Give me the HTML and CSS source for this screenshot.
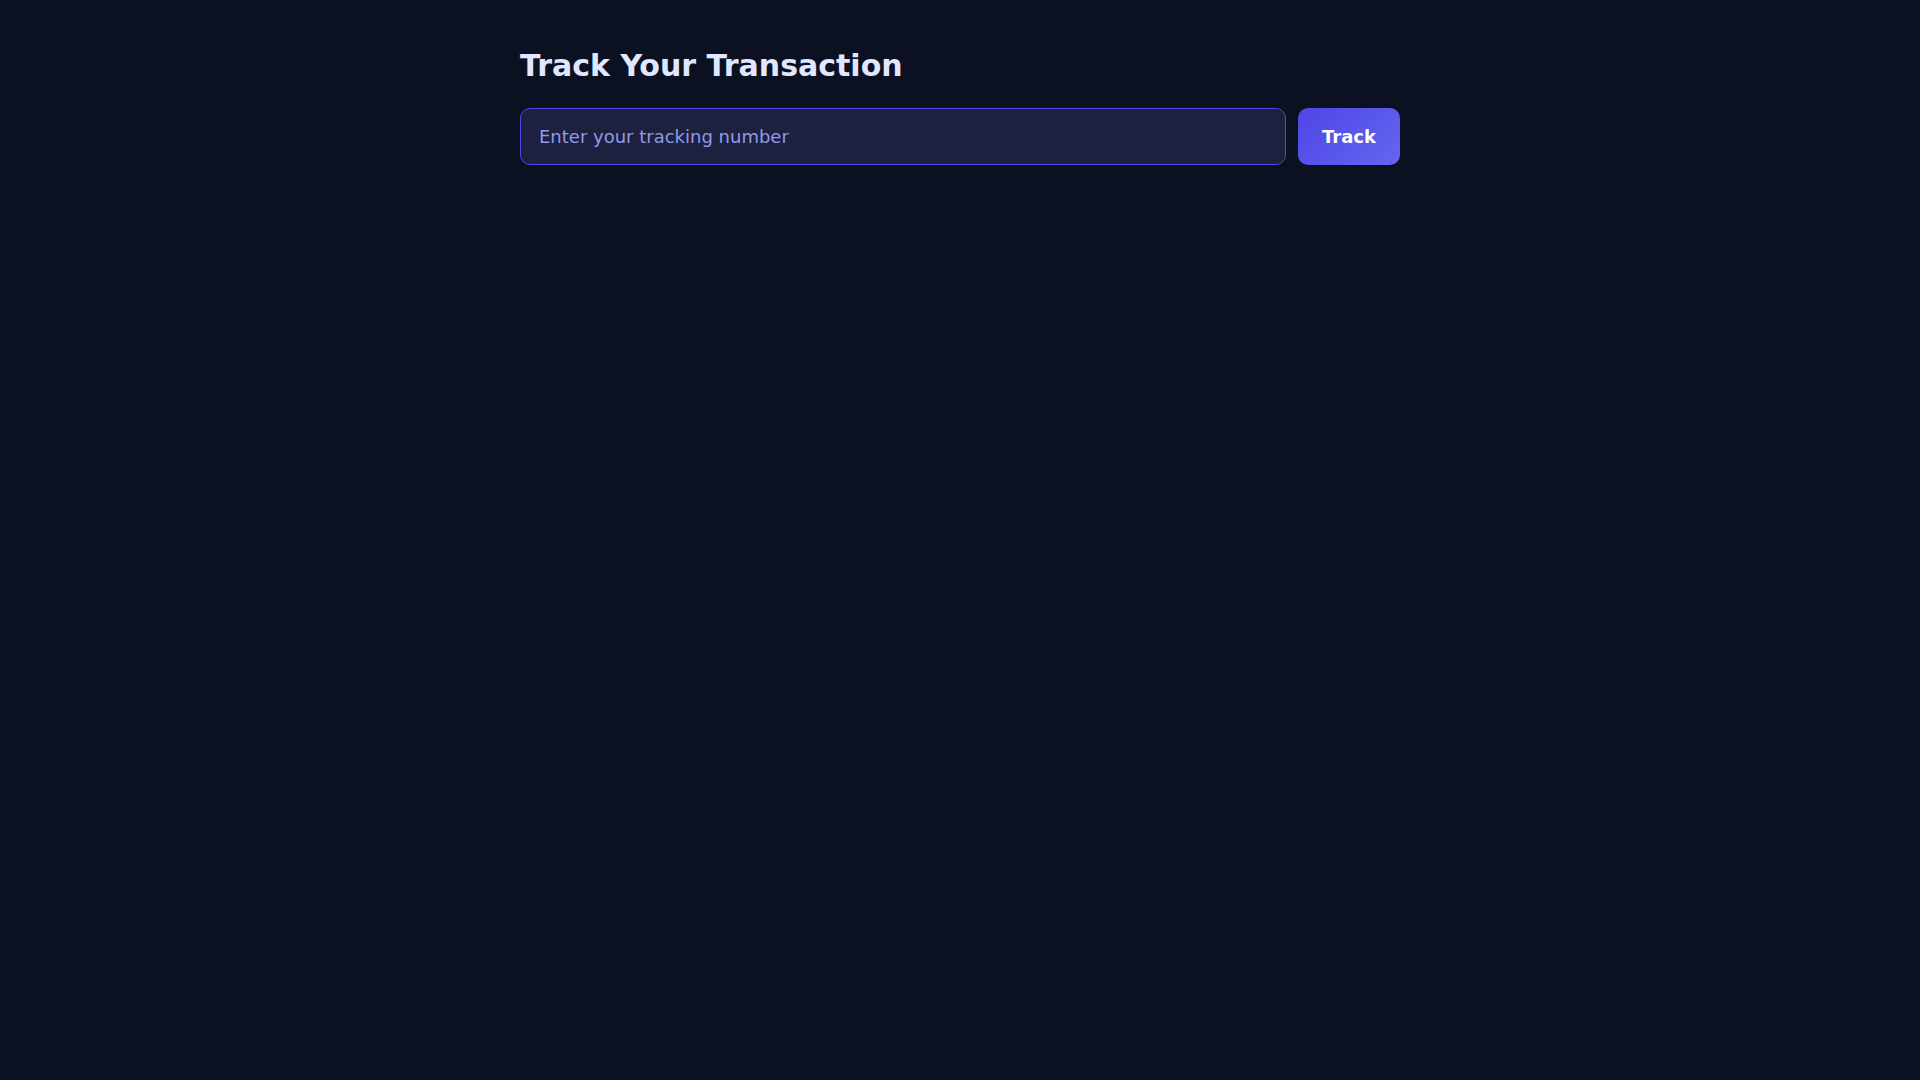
FILE: index.html
```html
<!DOCTYPE html>
<html lang="en">
<head>
  <meta charset="UTF-8">
  <meta name="viewport" content="width=device-width, initial-scale=1.0">
  <title>Track Your Transaction</title>
  <link rel="stylesheet" href="styles.css">
</head>
<body>
  <div class="container">
    <h1 class="title">Track Your Transaction</h1>
    <form class="track-form" onsubmit="return false;">
      <input type="text" class="track-input" placeholder="Enter your tracking number">
      <button type="submit" class="track-btn">Track</button>
    </form>
  </div>
</body>
</html>
```

FILE: styles.css
```css
body {
  margin: 0;
  background-color: #0b1120;
  font-family: "DejaVu Sans", sans-serif;
  color: #e0e7ff;
}

.container {
  max-width: 880px;
  margin: 0 auto;
  padding-top: 48px;
}

.title {
  font-size: 30px;
  font-weight: bold;
  margin: 0 0 25px 0;
  color: #e0e7ff;
}

.track-form {
  display: flex;
  gap: 12px;
}

.track-input {
  flex: 1;
  height: 57px;
  box-sizing: border-box;
  padding: 0 18px;
  font-family: "DejaVu Sans", sans-serif;
  font-size: 18px;
  color: #e0e7ff;
  background-color: #1e2040;
  border: 1px solid #4f46e5;
  border-radius: 10px;
  outline: none;
}

.track-input::placeholder {
  color: #8f9ae8;
}

.track-btn {
  height: 57px;
  padding: 0 24px;
  font-family: "DejaVu Sans", sans-serif;
  font-size: 18px;
  font-weight: bold;
  color: #ffffff;
  background: linear-gradient(135deg, #4f46e5, #6366f1);
  border: none;
  border-radius: 10px;
  cursor: pointer;
}
```
